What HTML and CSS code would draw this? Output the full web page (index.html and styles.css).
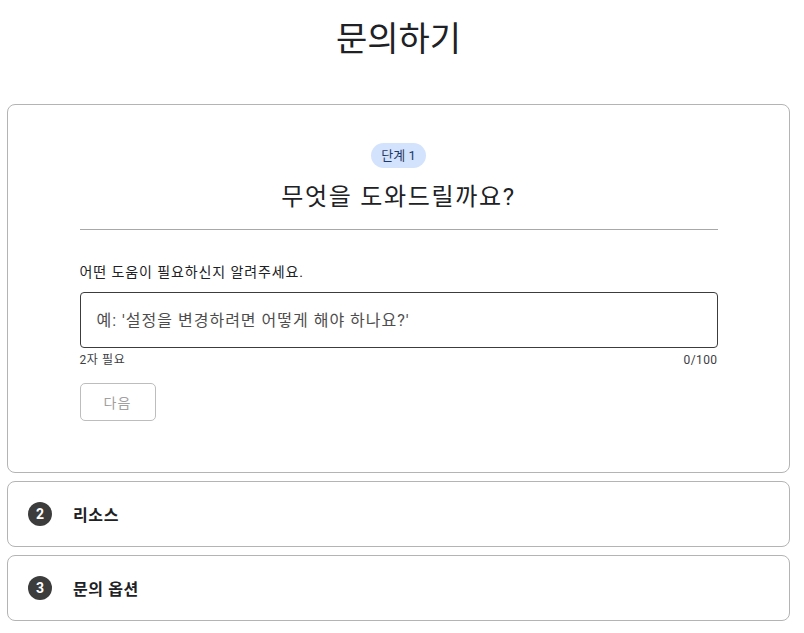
FILE: index.html
```html
<!DOCTYPE html>
<html lang="ko">
<head>
<meta charset="utf-8">
<title>문의하기</title>
<link rel="stylesheet" href="styles.css">
</head>
<body>
<h1 class="page-title">문의하기</h1>
<main class="steps">
  <section class="card card-open">
    <div class="step-inner">
      <div class="chip-row"><span class="chip">단계 1</span></div>
      <h2 class="step-heading">무엇을 도와드릴까요?</h2>
      <hr class="divider">
      <label class="field-label" for="q">어떤 도움이 필요하신지 알려주세요.</label>
      <div class="input-box">
        <input id="q" class="input" type="text" placeholder="예: '설정을 변경하려면 어떻게 해야 하나요?'">
      </div>
      <div class="helper-row">
        <span class="helper">2자 필요</span>
        <span class="counter">0/100</span>
      </div>
      <button class="next-btn" disabled>다음</button>
    </div>
  </section>
  <section class="card card-closed">
    <span class="num">2</span>
    <span class="closed-title">리소스</span>
  </section>
  <section class="card card-closed">
    <span class="num">3</span>
    <span class="closed-title">문의 옵션</span>
  </section>
</main>
</body>
</html>
```
FILE: styles.css
```css
* { box-sizing: border-box; }
body {
  margin: 0;
  padding: 0 14px 0 7px;
  font-family: Roboto, "Noto Sans CJK KR", sans-serif;
  color: #202124;
  background: #fff;
}
.page-title {
  margin: 0;
  padding-top: 17px;
  height: 104px;
  text-align: center;
  font-weight: 400;
  font-size: 34px;
  line-height: 44px;
  color: #202124;
}
.steps {
  display: flex;
  flex-direction: column;
  gap: 8px;
}
.card {
  border: 1px solid #b4b4b4;
  border-radius: 8px;
  background: #fff;
}
.card-open {
  height: 369px;
  padding-top: 38px;
}
.step-inner {
  width: 638px;
  margin: 0 auto;
  display: flex;
  flex-direction: column;
}
.chip-row {
  display: flex;
  justify-content: center;
}
.chip {
  display: inline-block;
  background: #d3e3fd;
  color: #1f3a66;
  font-size: 13px;
  line-height: 25px;
  height: 25px;
  padding: 0 10px;
  border-radius: 13px;
}
.step-heading {
  margin: 13px 0 0;
  text-align: center;
  font-size: 24px;
  font-weight: 400;
  line-height: 32px;
  letter-spacing: 1.7px;
  color: #202124;
}
.divider {
  margin: 16px 0 0;
  border: 0;
  border-top: 1px solid #a8a8a8;
  height: 0;
}
.field-label {
  margin-top: 32px;
  font-size: 14px;
  line-height: 20px;
  letter-spacing: 0.9px;
  color: #202124;
}
.input-box {
  margin-top: 10px;
  height: 56px;
  border: 1px solid #3c3c3c;
  border-radius: 4px;
  display: flex;
  align-items: center;
  padding: 0 16px;
}
.input {
  border: 0;
  outline: none;
  width: 100%;
  font-family: inherit;
  font-size: 16px;
  letter-spacing: 1px;
  color: #202124;
  background: transparent;
  padding: 0;
}
.input::placeholder { color: #4d4d4d; }
.helper-row {
  display: flex;
  justify-content: space-between;
  font-size: 12px;
  line-height: 18px;
  margin-top: 3px;
  color: #3c4043;
}
.helper { letter-spacing: 0.6px; }
.counter { letter-spacing: 0.4px; }
.next-btn {
  margin-top: 14px;
  width: 76px;
  height: 38px;
  border: 1px solid #bdbdbd;
  border-radius: 5px;
  background: #fff;
  color: #a0a0a0;
  font-family: inherit;
  font-size: 14px;
  letter-spacing: 1px;
  padding: 0;
}
.card-closed {
  height: 66px;
  display: flex;
  align-items: center;
  padding-left: 20px;
  gap: 21px;
}
.num {
  width: 24px;
  height: 24px;
  border-radius: 50%;
  background: #3c3c3c;
  color: #fff;
  font-weight: 700;
  font-size: 14px;
  display: flex;
  align-items: center;
  justify-content: center;
}
.closed-title {
  font-size: 16px;
  font-weight: 700;
  letter-spacing: 0.6px;
  color: #202124;
}
```
